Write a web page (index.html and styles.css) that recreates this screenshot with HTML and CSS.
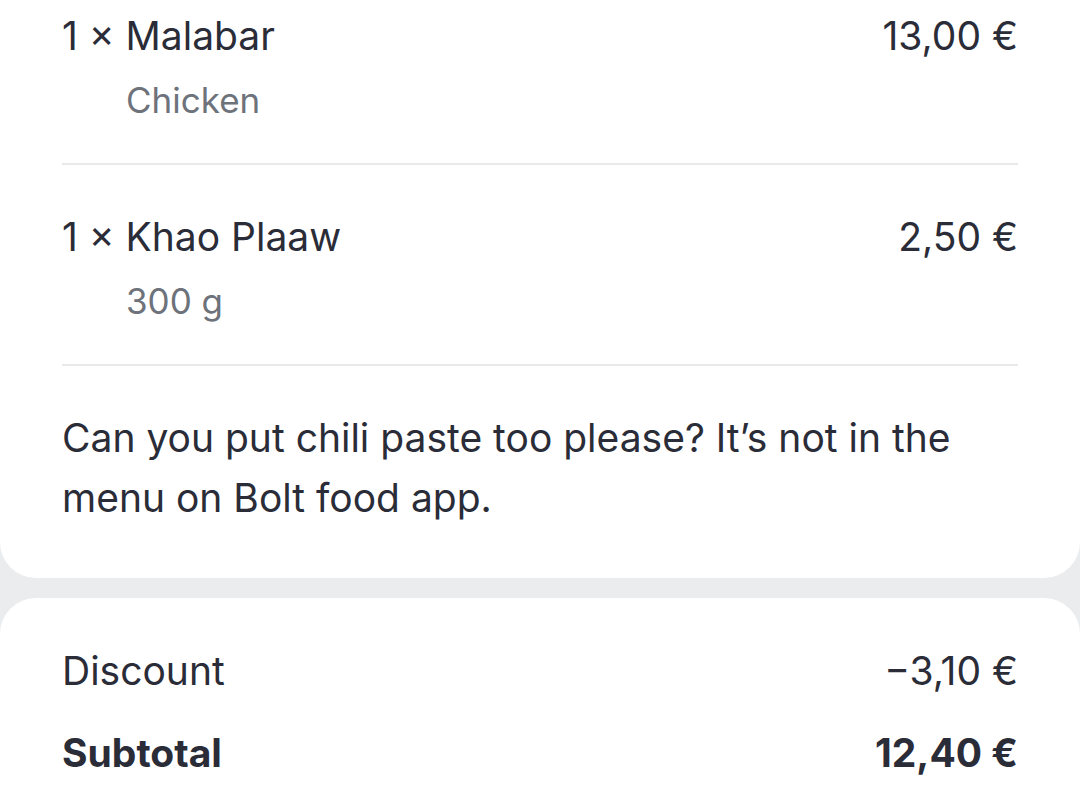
FILE: index.html
```html
<!DOCTYPE html>
<html>
<head>
<meta charset="utf-8">
<link rel="stylesheet" href="styles.css">
</head>
<body>
<div class="card card-top">
  <div class="item">
    <div class="row"><span>1 × Malabar</span><span>13,00 €</span></div>
    <div class="sub">Chicken</div>
  </div>
  <div class="item">
    <div class="row"><span>1 × Khao Plaaw</span><span>2,50 €</span></div>
    <div class="sub">300 g</div>
  </div>
  <p class="note">Can you put chili paste too please? It’s not in the menu on Bolt food app.</p>
</div>
<div class="card card-bottom">
  <div class="row total-row"><span>Discount</span><span>−3,10 €</span></div>
  <div class="row total-row bold"><span>Subtotal</span><span>12,40 €</span></div>
</div>
</body>
</html>
```
FILE: styles.css
```css
html, body {
  margin: 0;
  padding: 0;
}
body {
  background: #ebecee;
  font-family: Inter, "Noto Sans", sans-serif;
  color: #2a2c38;
  width: 1080px;
  height: 808px;
  overflow: hidden;
}
.card {
  background: #ffffff;
  padding: 0 62px;
}
.card-top {
  border-radius: 0 0 36px 36px;
  padding-top: 12px;
  padding-bottom: 50px;
}
.card-bottom {
  margin-top: 20px;
  border-radius: 36px 36px 0 0;
  padding-top: 49px;
  height: 200px;
}
.row {
  display: flex;
  justify-content: space-between;
  font-size: 39px;
  line-height: 48px;
}
.sub {
  font-size: 35px;
  line-height: 42px;
  color: #6d727b;
  padding-left: 64px;
  margin-top: 19px;
}
.item {
  border-bottom: 2px solid #e8e9eb;
  padding-bottom: 42px;
}
.item + .item {
  margin-top: 48px;
}
.note {
  margin: 42px 0 0;
  font-size: 39px;
  line-height: 60px;
}
.total-row + .total-row {
  margin-top: 34px;
}
.bold {
  font-weight: 700;
}
```
